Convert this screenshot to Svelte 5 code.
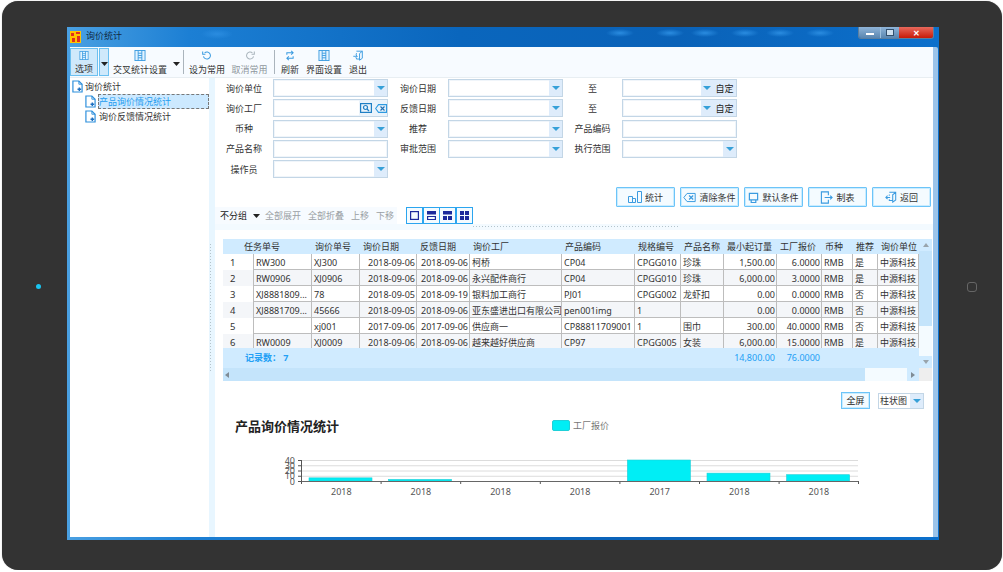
<script>
  const toolbar = [
    { label: '选项', icon: 'grid', width: 28, active: true },
    { label: '', icon: 'caret', width: 10, active: true, split: true },
    { label: '交叉统计设置', icon: 'grid', width: 62 },
    { label: '', icon: 'caret', width: 10, drop: true },
    { sep: true },
    { label: '设为常用', icon: 'undo', width: 40 },
    { label: '取消常用', icon: 'redo', width: 45, muted: true },
    { sep: true },
    { label: '刷新', icon: 'refresh', width: 24 },
    { label: '界面设置', icon: 'grid', width: 44 },
    { label: '退出', icon: 'exit', width: 24 }
  ]

  const fields = [
    ['询价单位', 'select', '询价日期', 'select', '至', 'custom'],
    ['询价工厂', 'search', '反馈日期', 'select', '至', 'custom'],
    ['币种', 'select', '推荐', 'select', '产品编码', 'text'],
    ['产品名称', 'text', '审批范围', 'select', '执行范围', 'select'],
    ['操作员', 'select']
  ]

  const actions = [
    { label: '统计', icon: 'bars' },
    { label: '清除条件', icon: 'clear' },
    { label: '默认条件', icon: 'tray' },
    { label: '制表', icon: 'doc' },
    { label: '返回', icon: 'back' }
  ]

  const columns = ['', '任务单号', '询价单号', '询价日期', '反馈日期', '询价工厂', '产品编码', '规格编号', '产品名称', '最小起订量', '工厂报价', '币种', '推荐', '询价单位']

  const rows = [
    ['1', 'RW300', 'XJ300', '2018-09-06', '2018-09-06', '柯桥', 'CP04', 'CPGG010', '珍珠', '1,500.00', '6.0000', 'RMB', '是', '中源科技'],
    ['2', 'RW0906', 'XJ0906', '2018-09-06', '2018-09-06', '永兴配件商行', 'CP04', 'CPGG010', '珍珠', '6,000.00', '3.0000', 'RMB', '是', '中源科技'],
    ['3', 'XJ8881809...', '78', '2018-09-05', '2018-09-19', '银料加工商行', 'PJ01', 'CPGG002', '龙虾扣', '0.00', '0.0000', 'RMB', '否', '中源科技'],
    ['4', 'XJ8881709...', '45666', '2018-09-05', '2018-09-06', '亚东盛进出口有限公司', 'pen001img', '1', '', '0.00', '0.0000', 'RMB', '否', '中源科技'],
    ['5', '', 'xj001', '2017-09-06', '2017-09-06', '供应商一', 'CP88811709001', '1', '围巾', '300.00', '40.0000', 'RMB', '否', '中源科技'],
    ['6', 'RW0009', 'XJ0009', '2018-09-06', '2018-09-06', '越来越好供应商', 'CP97', 'CPGG005', '女装', '6,000.00', '15.0000', 'RMB', '是', '中源科技']
  ]

  const right_aligned = [3, 4, 9, 10]

  // 图表数据
  const chart = [
    { year: '2018', value: 6 },
    { year: '2018', value: 3 },
    { year: '2018', value: 0 },
    { year: '2018', value: 0 },
    { year: '2017', value: 40 },
    { year: '2018', value: 15 },
    { year: '2018', value: 12 }
  ]
  const base_y = 481
  const x0 = 301.5
  const step = 79.6
  const scale = 21 / 40
  const ticks = [0, 10, 20, 30, 40]
</script>

{#snippet icon(name)}
  {#if name === 'grid'}
    <svg width="12" height="12" viewBox="0 0 12 12" fill="none" stroke="#3a9be0"><rect x="0.5" y="0.5" width="11" height="11" fill="#e3f3ff"/><path d="M4 .5v11M8 .5v11M4 3.5h4M4 6h4M4 8.500h4"/></svg>
  {:else if name === 'caret'}
    <svg class="caret" width="7" height="4" viewBox="0 0 7 4"><path d="M0 0h7L3.5 4z" fill="#222"/></svg>
  {:else if name === 'undo'}
    <svg width="12" height="12" viewBox="0 0 14 14" fill="none" stroke="#3a9be0" stroke-width="1.3"><path d="M4 3.5A4.5 4.5 0 1 1 2.5 8"/><path d="M1.5 2v3.5H5"/></svg>
  {:else if name === 'redo'}
    <svg width="12" height="12" viewBox="0 0 14 14" fill="none" stroke="#a9b4bc" stroke-width="1.3"><path d="M10 3.5A4.5 4.5 0 1 0 11.5 8"/><path d="M12.5 2v3.5H9"/></svg>
  {:else if name === 'refresh'}
    <svg width="12" height="12" viewBox="0 0 14 14" fill="none" stroke="#3a9be0" stroke-width="1.3"><path d="M3 6V3.5h7.500M8.500 1l2.500 2.500L8.500 6"/><path d="M11 8v2.500H3.500M5.500 13L3 10.500 5.500 8"/></svg>
  {:else if name === 'exit'}
    <svg width="12" height="12" viewBox="0 0 14 14" fill="none" stroke="#3a9be0" stroke-width="1.2"><path d="M5 1.5h7.500v9L9 13V4.500l3.500-3"/><path d="M5 4v2M5 10v1.500h4M1 8h5M4 6l2 2-2 2"/></svg>
  {:else if name === 'page'}
    <svg width="11" height="13" viewBox="0 0 12 14" fill="none"><path d="M1 1h6.500L11 4.500V13H1z" fill="#fff" stroke="#2d8fdc" stroke-width="1.3"/><path d="M7.500 1v3.500H11" stroke="#2d8fdc"/><path d="M8 8v4M6 10h4" stroke="#1e6fc0" stroke-width="1.6"/></svg>
  {:else if name === 'bars'}
    <svg width="14" height="12" viewBox="0 0 14 12" fill="none" stroke="#3a9be0"><path d="M.5 5.500h4v6h-4zM4.500 7.500h3v4h-3zM9.500 .5h4v11h-4z"/></svg>
  {:else if name === 'clear'}
    <svg width="13" height="11" viewBox="0 0 16 12" fill="none" stroke="#3a9be0" stroke-width="1.2"><path d="M5 1h10v10H5L1 6z"/><path d="M7.500 3.500l5 5M12.500 3.500l-5 5" stroke-width="1.5"/></svg>
  {:else if name === 'tray'}
    <svg width="11" height="11" viewBox="0 0 12 12" fill="none" stroke="#3a9be0" stroke-width="1.3"><path d="M1.500 1.500h9v7h-9zM3.500 8.500v3h5v-3"/></svg>
  {:else if name === 'doc'}
    <svg width="13" height="13" viewBox="0 0 14 14" fill="none" stroke="#3a9be0" stroke-width="1.2"><path d="M9 4.500V1H1.500v12H9V9.500M5 7h8M11 5l2 2-2 2"/></svg>
  {:else if name === 'back'}
    <svg width="12" height="12" viewBox="0 0 14 14" fill="none" stroke="#3a9be0" stroke-width="1.2"><path d="M5 1.500h7.500v9L9 13V4.500l3.500-3M5 4v1.500M5 9.500v1.500h4M1 7.500h5M3 5.500l-2 2 2 2"/></svg>
  {/if}
{/snippet}

<div class="tablet">
  <span class="camera"></span>
  <div class="window">
    <div class="titlebar">
      <svg class="app-icon" width="11" height="12" viewBox="0 0 11 12"><rect width="11" height="12" fill="#ffc400"/><path d="M1 2h3v3H1zM6 1h4v2H6zM2 7h3v4H2zM7 5h3v6H7z" fill="#e0301e"/></svg>
      <span class="title-text">询价统计</span>
      <div class="win-buttons">
        <span class="win-btn min"><i></i></span>
        <span class="win-btn max"><i></i></span>
        <span class="win-btn close">✕</span>
      </div>
    </div>

    <div class="content">
      <div class="toolbar">
        {#each toolbar as item}
          {#if item.sep}
            <span class="separator"></span>
          {:else}
            <div class="tool" class:active={item.active} class:muted={item.muted} class:split={item.split} class:drop-tool={item.drop} style="width: {item.width}px">
              {@render icon(item.icon)}
              {#if item.label}<span>{item.label}</span>{/if}
            </div>
          {/if}
        {/each}
      </div>

      <div class="main">
        <div class="tree">
          <div class="tree-row">{@render icon('page')}<span>询价统计</span></div>
          <div class="tree-row child">{@render icon('page')}<span class="selected">产品询价情况统计</span></div>
          <div class="tree-row child">{@render icon('page')}<span class="plain">询价反馈情况统计</span></div>
        </div>
        <div class="splitter"><span class="dots-v"></span></div>

        <div class="panel">
          <div class="form">
            {#each fields as row}
              {#each row as cell, i}
                {#if i % 2 === 0}
                  <span class="label">{cell}</span>
                {:else}
                  <div class="box">
                    {#if cell === 'select'}
                      <span class="drop"><i class="arrow"></i></span>
                    {:else if cell === 'custom'}
                      <span class="drop wide"><i class="arrow"></i><b>自定</b></span>
                    {:else if cell === 'search'}
                      <span class="drop search">
                        <svg width="12" height="10" viewBox="0 0 12 10" fill="none" stroke="#1f7fc4" stroke-width="1.2"><rect x=".6" y=".6" width="10.8" height="8.8"/><circle cx="5.5" cy="4.5" r="2"/><path d="M7 6l2 2"/></svg>
                        <svg width="12" height="9" viewBox="0 0 12 9" fill="none" stroke="#2f9ae0" stroke-width="1.1"><path d="M3.500.6h8v7.800h-8L.6 4.500z"/><path d="M5.500 2.500l4 4M9.500 2.500l-4 4" stroke="#1f6fb4"/></svg>
                      </span>
                    {/if}
                  </div>
                {/if}
              {/each}
            {/each}
          </div>

          <div class="actions">
            {#each actions as action}
              <button type="button" class="action">{@render icon(action.icon)}<span>{action.label}</span></button>
            {/each}
          </div>

          <div class="group-bar">
            <div class="group-tools">
              <span class="group-name">不分组</span>
              {@render icon('caret')}
              <span class="link first">全部展开</span>
              <span class="link">全部折叠</span>
              <span class="link">上移</span>
              <span class="link">下移</span>
            </div>
            <div class="layouts">
              <span class="layout"><svg width="9" height="9" viewBox="0 0 9 9"><rect x=".6" y=".6" width="7.8" height="7.8" fill="none" stroke="#1c2a9c" stroke-width="1.2"/></svg></span>
              <span class="layout"><svg width="9" height="9" viewBox="0 0 9 9" fill="#1c2a9c"><path d="M0 0h9v3.500H0zM0 5h9v4H7.800V6H1.200v3H0z"/><path d="M0 8h9v1H0z"/></svg></span>
              <span class="layout"><svg width="9" height="9" viewBox="0 0 9 9" fill="#1c2a9c"><path d="M0 0h9v3.500H0zM0 5h4v4H0zM5 5h4v4H5z"/></svg></span>
              <span class="layout"><svg width="9" height="9" viewBox="0 0 9 9" fill="#1c2a9c"><path d="M0 0h4v4H0zM5 0h4v4H5zM0 5h4v4H0zM5 5h4v4H5z"/></svg></span>
            </div>
          </div>

          <div class="divider"><span class="dots-h"></span></div>

          <div class="datagrid">
            <div class="grid-top">
              <div class="grid-body">
                <div class="cols head">
                  {#each columns as col}<span>{col}</span>{/each}
                </div>
                <div class="rows">
                  {#each rows as row, r}
                    <div class="cols row" class:even={r % 2 === 1}>
                      {#each row as cell, i}
                        <span class="cell" class:num={i === 0} class:right={right_aligned.includes(i)}>{cell}</span>
                      {/each}
                    </div>
                  {/each}
                </div>
                <div class="cols foot">
                  <span class="count">记录数： 7</span>
                  <span class="sum-a">14,800.00</span>
                  <span class="sum-b">76.0000</span>
                </div>
              </div>
              <div class="vscroll">
                <span class="sb-arrow"><i class="up"></i></span>
                <span class="v-thumb"></span>
                <span class="v-track"></span>
                <span class="sb-arrow"><i class="down"></i></span>
              </div>
            </div>
            <div class="hscroll">
              <span class="h-thumb"><i class="left"></i></span>
              <span class="h-track"></span>
              <span class="sb-arrow h"><i class="right-arrow"></i></span>
              <span class="corner"></span>
            </div>
          </div>

          <div class="chart-tools">
            <button type="button" class="full">全屏</button>
            <div class="chart-type"><span>柱状图</span><span class="drop"><i class="arrow"></i></span></div>
          </div>

          <svg class="chart" viewBox="215 410 718 127" width="718" height="127">
            <text x="235" y="431" class="chart-title">产品询价情况统计</text>
            <rect x="552.5" y="420.5" width="17" height="10" rx="1.5" fill="#00eef5" stroke="#1fd0d8"/>
            <text x="573" y="429" class="legend">工厂报价</text>

            {#each ticks as t}
              {#if t > 0}
                <line x1={x0} x2="858" y1={base_y - t * scale + 0.5} y2={base_y - t * scale + 0.5} stroke="#dcdcdc"/>
              {/if}
              <line x1="298" x2={x0} y1={base_y - t * scale + 0.5} y2={base_y - t * scale + 0.5} stroke="#555"/>
              <text x="295" y={base_y - t * scale + 3.5} class="axis" text-anchor="end">{t}</text>
            {/each}

            {#each chart as bar, i}
              {#if bar.value > 0}
                <rect x={x0 + i * step + 7.5} y={base_y - bar.value * scale} width="63" height={bar.value * scale} fill="#00eef5" stroke="#1fd0d8" stroke-width=".6"/>
              {/if}
              <text x={x0 + i * step + step / 2} y="495" class="axis" text-anchor="middle">{bar.year}</text>
              <line x1={x0 + i * step} x2={x0 + i * step} y1={base_y} y2={base_y + 3} stroke="#555"/>
            {/each}
            <line x1="858.5" x2="858.5" y1={base_y} y2={base_y + 3} stroke="#555"/>
            <line x1={x0} x2={x0} y1="460" y2={base_y} stroke="#555"/>
            <line x1={x0} x2="858.5" y1={base_y + 0.5} y2={base_y + 0.5} stroke="#666"/>
          </svg>
        </div>
      </div>
    </div>
  </div>
  <span class="home"></span>
</div>

<style>
  :global(body) {
    margin: 0;
    background: #fff;
  }

  .tablet {
    position: relative;
    box-sizing: border-box;
    width: 1000px;
    height: 569px;
    margin: 1px 0 0 2px;
    padding: 26px 0 0 65px;
    background: #333;
    border-radius: 16px;
    box-shadow: 0 0 1px #999;
    font-family: "Noto Sans", "Noto Sans CJK SC", sans-serif;
    font-size: 9px;
    color: #333;
  }

  .camera {
    position: absolute;
    left: 34px;
    top: 283px;
    width: 5px;
    height: 5px;
    border-radius: 50%;
    background: #19c5f0;
  }

  .home {
    position: absolute;
    left: 965px;
    top: 281px;
    box-sizing: border-box;
    width: 10px;
    height: 10px;
    border: 1px solid #666;
    border-radius: 3px;
  }

  .window {
    display: flex;
    flex-direction: column;
    box-sizing: border-box;
    width: 872px;
    height: 513px;
    padding: 0 1px 3px 3px;
    background:
      radial-gradient(ellipse 16px 5px at 150px 7px, #2a8ce0, transparent),
      radial-gradient(ellipse 14px 4px at 553px 6px, #2a8ce0, transparent),
      radial-gradient(ellipse 14px 4px at 603px 6px, #2a8ce0, transparent),
      radial-gradient(ellipse 14px 4px at 638px 6px, #2a8ce0, transparent),
      radial-gradient(ellipse 14px 4px at 678px 6px, #2a8ce0, transparent),
      radial-gradient(ellipse 14px 4px at 713px 6px, #2a8ce0, transparent),
      radial-gradient(ellipse 14px 4px at 753px 6px, #2a8ce0, transparent),
      linear-gradient(90deg, #4aa0e2 0, #1c7fd4 14%, #0a66bd 45%, #0a62b8 70%, #0c70cc 100%);
  }

  .titlebar {
    display: flex;
    align-items: center;
    flex: none;
    height: 20px;
    gap: 5px;
    font-size: 9px;
    color: #102a44;
  }

  .app-icon {
    margin-top: -1px;
  }

  .title-text {
    margin-top: -3px;
  }

  .win-buttons {
    display: flex;
    align-self: flex-start;
    margin-left: auto;
    margin-right: 4px;
    height: 11px;
    border: 1px solid #5c7f9f;
    border-top: 0;
    border-radius: 0 0 3px 3px;
    overflow: hidden;
  }

  .win-btn {
    display: flex;
    align-items: center;
    justify-content: center;
    width: 21px;
    background: linear-gradient(#8fb4d8, #5a86b0);
  }

  .win-btn.max {
    width: 18px;
    border-left: 1px solid #9ec0de;
  }

  .win-btn.min i {
    width: 8px;
    height: 2px;
    background: #fff;
    margin-top: 3px;
  }

  .win-btn.max i {
    width: 6px;
    height: 5px;
    border: 1px solid #33506e;
    background: #cfe0ef;
  }

  .win-btn.close {
    width: 34px;
    color: #fff;
    font-size: 8px;
    font-weight: bold;
    background: linear-gradient(#e8695c, #c81a08);
  }

  .content {
    display: flex;
    flex-direction: column;
    flex: 1;
    min-height: 0;
    background: #fff;
    border-right: 5px solid #9cc4ea;
    border-radius: 2px 2px 0 0;
  }

  .toolbar {
    display: flex;
    align-items: stretch;
    flex: none;
    box-sizing: border-box;
    height: 31px;
    padding: 1px 0;
    background: #f7fbff;
    border-bottom: 1px solid #e8eef2;
  }

  .tool {
    display: flex;
    flex-direction: column;
    align-items: center;
    justify-content: center;
    box-sizing: border-box;
    gap: 2px;
    padding-top: 2px;
    white-space: nowrap;
    flex: none;
  }

  .tool.active {
    background: #cfe9fb;
    border: 1px solid #6cc0f0;
  }

  .tool.split {
    margin-left: 1px;
    padding-top: 3px;
  }

  .tool.drop-tool {
    padding-top: 3px;
  }

  .tool.muted {
    color: #8f979d;
  }

  .separator {
    flex: none;
    width: 1px;
    margin: 2px 3px 2px 2px;
    background: #aab4bc;
  }

  .main {
    display: flex;
    flex: 1;
    min-height: 0;
  }

  .tree {
    flex: none;
    box-sizing: border-box;
    width: 139px;
    padding: 1px 0 0 2px;
  }

  .tree-row {
    display: flex;
    align-items: center;
    gap: 2px;
    height: 15px;
    white-space: nowrap;
  }

  .tree-row.child {
    padding-left: 13px;
  }

  .selected {
    flex: 1;
    line-height: 13px;
    border: 1px dashed #777;
    background: #cce9ff;
    color: #1e9cf0;
  }

  .plain {
    padding-left: 1px;
  }

  .splitter {
    display: flex;
    align-items: center;
    flex: none;
    width: 6px;
    background: #e8f6ff;
  }

  .dots-v {
    width: 3px;
    height: 130px;
    background: radial-gradient(circle, #b4c4cc 0.8px, transparent 1px) 0 0 / 3px 3px;
  }

  .panel {
    flex: 1;
    min-width: 0;
    display: flex;
    flex-direction: column;
  }

  .form {
    display: grid;
    grid-template-columns: 58px 115px 60px 115px 59px 115px;
    grid-auto-rows: 18px;
    row-gap: 2.3px;
    padding-top: 1px;
    flex: none;
    height: 99px;
    align-content: start;
  }

  .label {
    align-self: center;
    text-align: center;
    white-space: nowrap;
  }

  .box {
    display: flex;
    justify-content: flex-end;
    box-sizing: border-box;
    border: 1px solid #c3d6e6;
    background: #fff;
    box-shadow: inset 0 0 0 1px #f0f5fa;
  }

  .drop {
    display: flex;
    align-items: center;
    justify-content: center;
    flex: none;
    width: 13px;
    background: #deecfb;
  }

  .drop.wide {
    width: 35px;
    gap: 4px;
  }

  .drop.wide b {
    font-weight: normal;
    color: #222;
  }

  .drop.search {
    width: 28px;
    gap: 3px;
    background: #eaf3fb;
  }

  .arrow {
    width: 0;
    height: 0;
    border: 4px solid transparent;
    border-top: 4px solid #36a0d8;
    border-bottom: 0;
  }

  .actions {
    display: flex;
    justify-content: flex-end;
    flex: none;
    gap: 5px;
    height: 20px;
    margin-top: 9px;
    padding-right: 2px;
  }

  .action {
    display: flex;
    align-items: center;
    justify-content: center;
    gap: 3px;
    box-sizing: border-box;
    width: 59px;
    padding: 0;
    border: 1px solid #6cc4f8;
    border-radius: 1px;
    box-shadow: inset 0 0 0 1px #c9ecff;
    background: #f4fbff;
    font: inherit;
    color: #333;
    white-space: nowrap;
  }

  .group-bar {
    display: flex;
    flex: none;
    height: 17px;
  }

  .group-tools {
    display: flex;
    align-items: center;
    box-sizing: border-box;
    width: 182px;
    padding-left: 5px;
    background: #f7fbff;
    white-space: nowrap;
  }

  .caret {
    flex: none;
  }

  .group-name {
    margin-right: 6px;
    color: #222;
  }

  .link {
    margin-right: 7px;
    color: #9a9fa4;
  }

  .link:last-child {
    margin-right: 0;
  }

  .link.first {
    margin-left: 5px;
  }

  .layouts {
    display: flex;
    margin-left: 9px;
  }

  .layout {
    display: flex;
    align-items: center;
    justify-content: center;
    box-sizing: border-box;
    width: 17px;
    height: 17px;
    margin-left: -0.25px;
    border: 1px solid #2ba5ef;
    background: #f4fbff;
  }

  .divider {
    flex: none;
    box-sizing: border-box;
    height: 6px;
    padding: 1px 0 0 257px;
    background: #f3faff;
  }

  .dots-h {
    display: block;
    width: 208px;
    height: 3px;
    background: radial-gradient(circle, #b4c4cc 0.8px, transparent 1px) 0 0 / 3px 3px;
  }

  .datagrid {
    flex: none;
    margin: 9px 1px 0 8px;
    height: 142px;
  }

  .grid-top {
    display: flex;
    height: 129px;
  }

  .grid-body {
    width: 696px;
  }

  .cols {
    display: grid;
    grid-template-columns: 31px 58px 48px 57px 53px 92px 73px 46px 43px 53px 45px 31px 25px 41px;
  }

  .head {
    height: 15px;
    line-height: 16px;
    background: #d0ebff;
    white-space: nowrap;
  }

  .head span {
    padding-left: 3px;
  }

  .head span:nth-child(2) {
    margin-left: -13px;
  }

  .rows {
    height: 94px;
    overflow: hidden;
  }

  .row {
    height: 16px;
    background: #fff;
  }

  .row.even {
    background: #f4f6f9;
  }

  .cell {
    box-sizing: border-box;
    padding: 0 1px 0 2px;
    line-height: 17px;
    border-right: 1px solid #bdbdbd;
    border-bottom: 1px solid #bdbdbd;
    white-space: nowrap;
    overflow: hidden;
  }

  .cell.num {
    padding-left: 7px;
    border-bottom: 0;
    font-size: 9.5px;
  }

  .cell.right {
    text-align: right;
  }

  .foot {
    height: 20px;
    line-height: 19px;
    background: #d0ebff;
    color: #22a0f5;
  }

  .count {
    grid-column: 1 / span 2;
    padding-left: 22px;
    font-weight: bold;
    white-space: nowrap;
  }

  .sum-a {
    grid-column: 10;
    text-align: right;
    padding-right: 2px;
  }

  .sum-b {
    grid-column: 11;
    text-align: right;
    padding-right: 2px;
  }

  .vscroll {
    display: flex;
    flex-direction: column;
    flex: none;
    width: 13px;
    background: #f4fbff;
  }

  .sb-arrow {
    display: flex;
    align-items: center;
    justify-content: center;
    flex: none;
    height: 12px;
    background: #d0ebff;
  }

  .v-thumb {
    height: 75px;
    background: #c4e4fb;
  }

  .v-track {
    flex: 1;
  }

  .up, .down, .left, .right-arrow {
    display: block;
    width: 0;
    height: 0;
    border: 3.5px solid transparent;
  }

  .up {
    border-bottom: 4px solid #99a4ac;
    border-top: 0;
  }

  .down {
    border-top: 4px solid #99a4ac;
    border-bottom: 0;
  }

  .left {
    border-right: 4px solid #7f8c96;
    border-left: 0;
  }

  .right-arrow {
    border-left: 4px solid #7f8c96;
    border-right: 0;
  }

  .hscroll {
    display: flex;
    height: 13px;
  }

  .h-thumb {
    display: flex;
    align-items: center;
    box-sizing: border-box;
    width: 642px;
    padding-left: 2px;
    background: #c4e4fb;
  }

  .h-track {
    width: 42px;
    background: #f4fbff;
  }

  .sb-arrow.h {
    width: 12px;
    height: 13px;
  }

  .corner {
    width: 13px;
    background: #eee;
  }

  .chart-tools {
    display: flex;
    justify-content: flex-end;
    align-items: center;
    flex: none;
    gap: 8px;
    height: 17px;
    margin-top: 11px;
    padding-right: 9px;
  }

  .full {
    box-sizing: border-box;
    width: 29px;
    height: 17px;
    padding: 0;
    border: 1px solid #6cc4f8;
    box-shadow: inset 0 0 0 1px #c9ecff;
    background: #f4fbff;
    font: inherit;
    color: #222;
  }

  .chart-type {
    display: flex;
    justify-content: space-between;
    box-sizing: border-box;
    width: 46px;
    height: 16px;
    padding-left: 1px;
    border: 1px solid #c3d6e6;
    line-height: 14px;
    white-space: nowrap;
  }

  .chart {
    display: block;
    flex: none;
    margin-top: 1px;
  }

  .chart-title {
    font-size: 13px;
    font-weight: 700;
    fill: #222;
  }

  .legend {
    font-size: 9px;
    fill: #777;
  }

  .axis {
    font-size: 9px;
    fill: #555;
  }
</style>
